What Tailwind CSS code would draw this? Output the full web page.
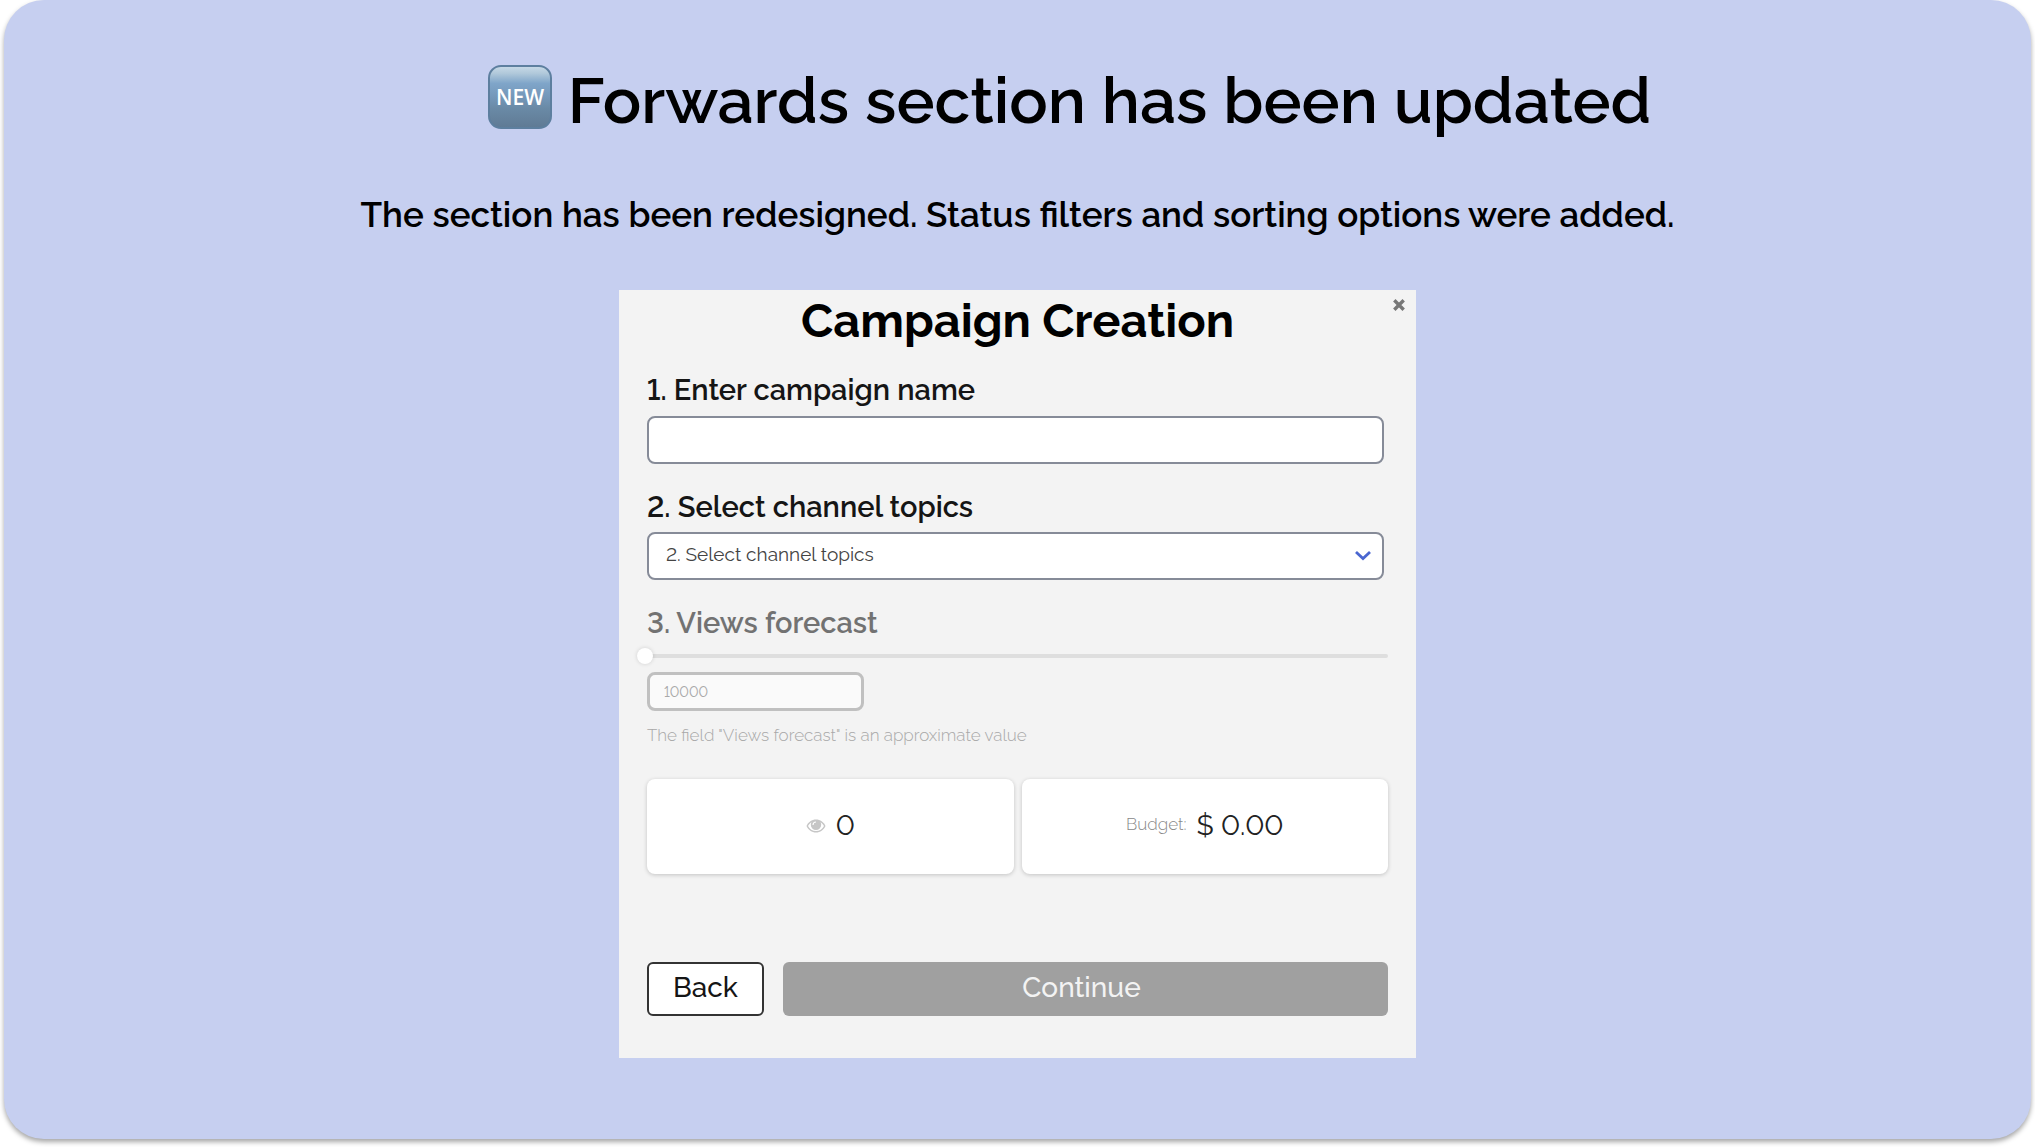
<!DOCTYPE html>
<html lang="en">
<head>
  <meta charset="UTF-8" />
  <meta name="viewport" content="width=device-width, initial-scale=1" />
  <title>Forwards section has been updated</title>
  <script src="https://cdn.jsdelivr.net/npm/@tailwindcss/browser@4"></script>
</head>
<body class="bg-white min-h-screen flex px-1 pb-2 font-[Raleway,Lato,sans-serif] lining-nums">
  <main class="flex-1 bg-[#c6cff0] rounded-[40px] shadow-[0_3px_5px_rgba(0,0,0,0.35)] pt-[61px] pb-20 text-black">
    <!-- Heading -->
    <h1 class="flex items-center justify-center gap-4 pl-[104px] text-[64px] leading-[80px] font-semibold">
      <svg class="w-16 h-16 shrink-0 -mt-2" viewBox="0 0 64 64" role="img" aria-label="New">
        <defs>
          <linearGradient id="badge" x1="0" y1="0" x2="0" y2="1">
            <stop offset="0" stop-color="#c9dbe8" />
            <stop offset="0.12" stop-color="#b0c8da" />
            <stop offset="0.28" stop-color="#7fa5c9" />
            <stop offset="0.5" stop-color="#7497b9" />
            <stop offset="0.68" stop-color="#6a8aa6" />
            <stop offset="1" stop-color="#5f7a94" />
          </linearGradient>
        </defs>
        <rect x="1" y="1" width="62" height="62" rx="12" fill="url(#badge)" stroke="#5d7f9f" stroke-width="2" />
        <text x="32" y="40" text-anchor="middle" fill="#fff" class="text-[21px] font-semibold font-['Open_Sans',sans-serif]">NEW</text>
      </svg>
      <span>Forwards section has been updated</span>
    </h1>
    <p class="mt-[47px] text-center text-[35px] leading-[54px] font-semibold">The section has been redesigned. Status filters and sorting options were added.</p>

    <!-- Campaign form -->
    <form class="relative mt-12 mx-auto w-full max-w-[797px] bg-[#f3f3f3] px-7 pb-[42px]">
      <button type="button" aria-label="Close" class="absolute top-[9px] right-[11px] w-3 h-3 text-[#777]">
        <svg class="w-3 h-3" viewBox="0 0 12 12" fill="none" stroke="currentColor" stroke-width="3.4"><path d="M1.3 1.3l9.4 9.4M10.7 1.3l-9.4 9.4" /></svg>
      </button>
      <h2 class="text-center text-[47px] leading-[62px] font-bold">Campaign Creation</h2>

      <label for="name" class="block mt-5 text-[29px] leading-9 font-semibold text-[#151515]">1. Enter campaign name</label>
      <div class="mt-2 mr-1">
        <input id="name" type="text" class="block w-full h-12 px-4 bg-white border-2 border-[#868b98] rounded-lg text-[19px]" />
      </div>

      <label for="topics" class="block mt-[25px] text-[29px] leading-9 font-semibold text-[#151515]">2. Select channel topics</label>
      <div class="relative mt-[7px] mr-1">
        <select id="topics" class="block w-full h-12 pl-[17px] pr-12 pb-1 appearance-none bg-white border-2 border-[#868b98] rounded-lg text-[19px] text-[#444]">
          <option>2. Select channel topics</option>
        </select>
        <svg class="absolute right-[13px] top-[18px] w-4 h-3 pointer-events-none" viewBox="0 0 16 12" fill="none" stroke="#4a66d0" stroke-width="2.8"><path d="M1 2l7 6.500L15 2" /></svg>
      </div>

      <label for="forecast" class="block mt-[25px] text-[29px] leading-9 font-semibold text-[#727272]">3. Views forecast</label>
      <div class="flex mt-[7px]">
        <input type="range" min="10000" max="1000000" value="10000" aria-label="Views forecast" class="flex-1 -ml-[10px] h-4 appearance-none bg-transparent [&::-webkit-slider-runnable-track]:h-1 [&::-webkit-slider-runnable-track]:rounded-full [&::-webkit-slider-runnable-track]:bg-[#dedede] [&::-webkit-slider-thumb]:appearance-none [&::-webkit-slider-thumb]:w-4 [&::-webkit-slider-thumb]:h-4 [&::-webkit-slider-thumb]:-mt-[6px] [&::-webkit-slider-thumb]:rounded-full [&::-webkit-slider-thumb]:bg-white [&::-webkit-slider-thumb]:shadow-[0_0_4px_rgba(0,0,0,0.15)]" />
      </div>
      <input id="forecast" type="text" value="10000" class="block mt-2 w-[217px] h-[39px] px-[14px] bg-[#fafafa] border-3 border-[#c0c0c0] rounded-lg text-[14px] text-[#a9a9a9]" />
      <p class="mt-3 text-[17px] leading-6 font-light text-[#a8a8a8]">The field "Views forecast" is an approximate value</p>

      <div class="mt-8 grid grid-cols-2 gap-2">
        <div class="h-[95px] pb-[2px] flex items-center justify-center gap-[10px] bg-white rounded-lg shadow-[0_1px_4px_rgba(0,0,0,0.2)]">
          <svg class="w-5 h-[14px]" viewBox="0 0 20 14">
            <path d="M10 .5C5.800.5 2.300 3 .5 7c1.800 4 5.300 6.500 9.500 6.500s7.700-2.500 9.500-6.500C17.700 3 14.200.5 10 .5z" fill="#c6c6c6" />
            <path d="M5.500 3.200C4 4.100 2.800 5.400 2 7c1.500 3 4.500 5 8 5s6.500-2 8-5c-.8-1.600-2-2.900-3.500-3.800.5.800.7 1.600.7 2.600a5.200 5.200 0 0 1-10.400 0c0-1 .2-1.800.7-2.600z" fill="#fff" />
            <path d="M7 6a3 3 0 0 1 3-3" fill="none" stroke="#fff" stroke-width="1.1" />
          </svg>
          <span class="text-[28px] leading-9 text-[#222]">0</span>
        </div>
        <div class="h-[95px] pb-[2px] flex items-center justify-center gap-[10px] bg-white rounded-lg shadow-[0_1px_4px_rgba(0,0,0,0.2)]">
          <span class="pb-1 text-[17px] leading-6 font-light text-[#888]">Budget:</span>
          <span class="text-[28px] leading-9 text-[#222]">$ 0.00</span>
        </div>
      </div>

      <div class="mt-[88px] flex gap-[19px]">
        <button type="button" class="w-[117px] h-[54px] pb-[2px] bg-white border-2 border-[#333] rounded-md text-[28px] leading-9 font-medium text-[#151515]">Back</button>
        <button type="submit" class="flex-1 h-[54px] pb-[2px] pr-2 bg-[#a0a0a0] rounded-md text-[28px] leading-9 font-medium text-[#f3f3f3]">Continue</button>
      </div>
    </form>
  </main>
</body>
</html>
